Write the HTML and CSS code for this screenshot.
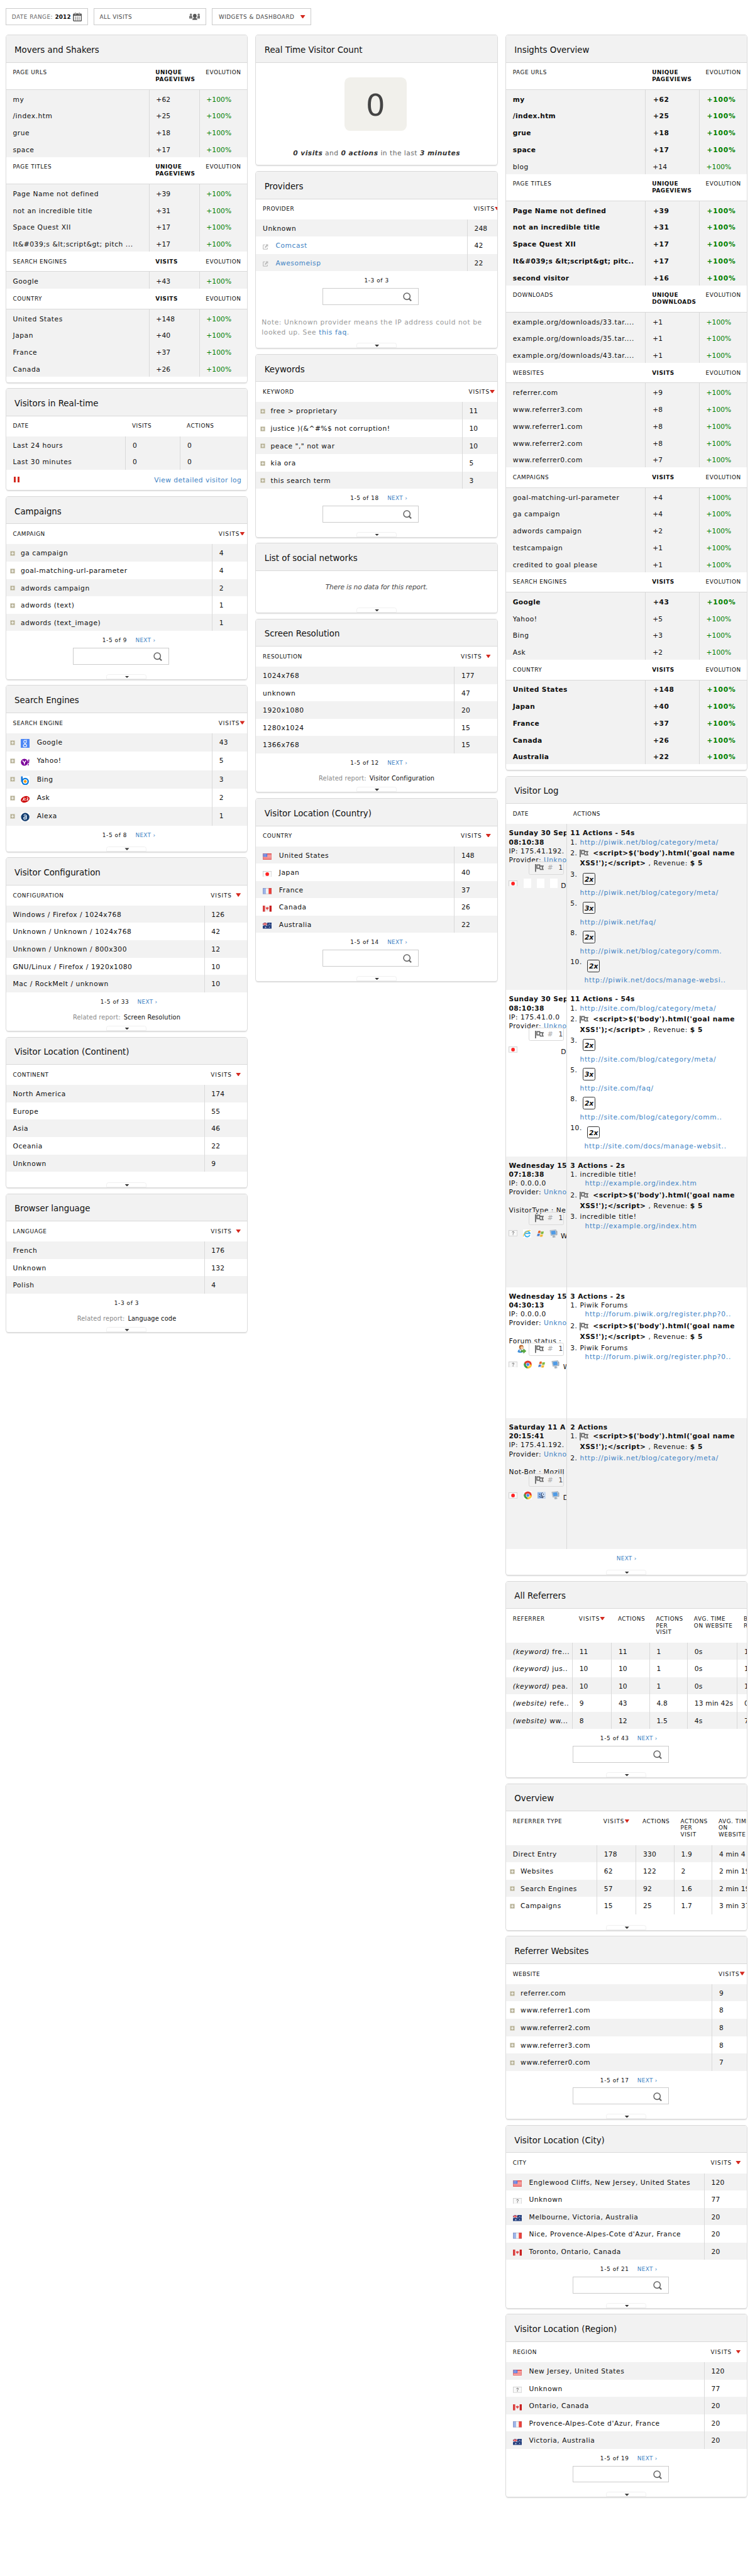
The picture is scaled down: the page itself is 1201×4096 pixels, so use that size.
FILE: index.html
```html
<!DOCTYPE html>
<html lang="en">
<head>
<meta charset="utf-8">
<title>Dashboard</title>
<link rel="stylesheet" href="styles.css">
</head>
<body>
<svg class="defs" width="0" height="0" aria-hidden="true">
  <symbol id="plus" viewBox="0 0 9 9"><rect width="9" height="9" rx="1.5" fill="#dcd8c8"/><rect x="1" y="1" width="7" height="7" fill="#b5b096"/><path d="M4.5 2v5M2 4.5h5" stroke="#fff" stroke-width="1.2"/></symbol>
  <symbol id="lens" viewBox="0 0 16 16"><circle cx="7" cy="7" r="5.8" fill="none" stroke="#666" stroke-width="1.7"/><path d="M10.5 11l4.3 4" stroke="#666" stroke-width="2.4"/></symbol>
  <symbol id="ext" viewBox="0 0 10 10"><path d="M4 1.5H.8v7.7h7.4V6.5" fill="none" stroke="#aaa"/><path d="M5 .5h4.5V5L8 3.6 5 7 3.2 5.500 6.500 2z" fill="#bbb"/></symbol>
  <symbol id="us" viewBox="0 0 16 11"><rect width="16" height="11" fill="#e33"/><path d="M0 2.500h16M0 4.500h16M0 6.500h16M0 8.500h16" stroke="#fff"/><rect width="8" height="6" fill="#4a6fe0"/><path d="M1 1.500h6M1.500 3h6M1 4.500h6" stroke="#fff" stroke-width=".8" stroke-dasharray="1 1"/><rect x=".5" y=".5" width="15" height="10" fill="none" stroke="#c66" stroke-opacity=".6"/></symbol>
  <symbol id="jp" viewBox="0 0 16 11"><rect x=".5" y=".5" width="15" height="10" fill="#fafafa" stroke="#ccc"/><circle cx="8" cy="5.500" r="3.200" fill="#f22"/></symbol>
  <symbol id="fr" viewBox="0 0 16 11"><rect width="16" height="11" fill="#f2f2f2"/><rect width="5.500" height="11" fill="#9db4ea"/><rect x="10.500" width="5.500" height="11" fill="#f0413a"/><rect x=".5" y=".5" width="15" height="10" fill="none" stroke="#668" stroke-opacity=".35"/></symbol>
  <symbol id="ca" viewBox="0 0 16 11"><rect width="16" height="11" fill="#f4f4f4"/><rect width="4" height="11" fill="#d94040"/><rect x="12" width="4" height="11" fill="#c81e1e"/><path d="M8 2l1 1.500 1.800-.3-.6 2.300L8.400 7v1.500h-.8V7L5.800 5.500l-.6-2.300L7 3.500z" fill="#e04a4a"/></symbol>
  <symbol id="au" viewBox="0 0 16 11"><rect width="16" height="11" fill="#26417f"/><path d="M0 0l8 5.500M8 0L0 5.500" stroke="#fff" stroke-width="1.200"/><path d="M4 0v5.500M0 2.500h8" stroke="#e55" stroke-width="1.500"/><circle cx="5" cy="8.500" r="1.200" fill="#dde"/><path d="M12 2v1.500M12 7.500V9M10 4.500h1M14 4h1" stroke="#fff"/></symbol>
  <symbol id="xx" viewBox="0 0 16 11"><rect x=".5" y=".5" width="15" height="10" fill="#f8f8f8" stroke="#ccc"/><path d="M6.500 4c0-1.800 3.200-1.800 3.200 0C9.700 5.200 8 5 8 6.500M8 7.500v1.200" fill="none" stroke="#555" stroke-width="1.100"/></symbol>
  <symbol id="google" viewBox="0 0 16 16"><rect width="16" height="16" rx="1" fill="#4c86f5"/><ellipse cx="7.700" cy="5" rx="2.300" ry="2.700" fill="none" stroke="#fff" stroke-width="1.200"/><ellipse cx="7.700" cy="11.800" rx="3" ry="2.300" fill="none" stroke="#fff" stroke-width="1.200"/><path d="M8 7.500c-1.500 1 0 1.500 1.500 2.500M9 2.500l2-.5" fill="none" stroke="#fff" stroke-width="1.100"/></symbol>
  <symbol id="yahoo" viewBox="0 0 16 16"><circle cx="6.500" cy="9" r="6.200" fill="#7b0099"/><path d="M3.200 6l3.300 4 3-4M6.500 9.500V13" fill="none" stroke="#fff" stroke-width="1.700"/><path d="M14.500 4l-.8 7" stroke="#7b0099" stroke-width="2"/><circle cx="13.500" cy="13.500" r="1.200" fill="#7b0099"/></symbol>
  <symbol id="bing" viewBox="0 0 16 16"><rect width="16" height="16" fill="#fff"/><path d="M2 .5v10" stroke="#0a6fd8" stroke-width="2.800"/><circle cx="8" cy="9.700" r="5.300" fill="#fff" stroke="#0a7bdc" stroke-width="2.600"/><circle cx="8" cy="9.500" r="2.500" fill="#f90"/></symbol>
  <symbol id="ask" viewBox="0 0 16 16"><ellipse cx="8" cy="9" rx="8" ry="5.500" fill="#c00" transform="rotate(-20 8 9)"/><path d="M3 12l3-6 .5 5.500M4.500 10h2M10 6.500c-3 .5-1.500 2-.5 3s-.5 2-2 1.500M12.500 4.500l-1 7M14 7.500l-2 1.500 1.500 2" fill="none" stroke="#fff" stroke-width="1.100"/></symbol>
  <symbol id="alexa" viewBox="0 0 16 16"><rect width="16" height="16" fill="#fff"/><circle cx="8" cy="8" r="7.500" fill="#123c6e"/><path d="M5.500 5.500c1-2 4.500-1.500 4.500.5v6M10 7.500c-3 0-5 .7-4.500 3s4 1.500 4.500-1" fill="none" stroke="#cde" stroke-width="1.900"/></symbol>
  <symbol id="ie" viewBox="0 0 16 16"><rect width="16" height="16" fill="#fff"/><path d="M13 10.500A5.200 5.200 0 1 1 13.200 7.500H4" fill="none" stroke="#3bb3ee" stroke-width="2.400"/><path d="M1 13.500C-1 9 9 0 14.500 2" fill="none" stroke="#f6c83c" stroke-width="1.300"/></symbol>
  <symbol id="chrome" viewBox="0 0 16 16"><rect width="16" height="16" fill="#fff"/><circle cx="8" cy="8" r="7.500" fill="#e33b2e"/><path d="M8 8H15.500A7.500 7.500 0 0 1 7 15.400z" fill="#fc3"/><path d="M1.500 4.200L6 11l1.500 4.400A7.500 7.500 0 0 1 1.500 4.200z" fill="#3a4"/><circle cx="8" cy="8" r="3.600" fill="#fff"/><circle cx="8" cy="8" r="2.800" fill="#4486ee"/></symbol>
  <symbol id="win" viewBox="0 0 16 16"><path d="M4 3q2.500-1.500 4.500 0L7.500 7.500Q5 6 3 7.500z" fill="#e2662c"/><path d="M9.500 3.500q2.500 1 5 0l-1 4.500q-2.500 1.200-5 0z" fill="#7fb83c"/><path d="M2.500 8.500q2.500-1.500 4.500 0L6 13Q3.500 11.500 1.200 13z" fill="#4a7fd0"/><path d="M8 9q2.500 1.200 5 0l-1 4.500q-2.500 1-5 0z" fill="#f0b93a"/></symbol>
  <symbol id="pc" viewBox="0 0 16 16"><path d="M1 1.800L12.500.5l1.500 10L3 11.500z" fill="#c3ccd6" stroke="#9aa6b4" stroke-width=".8"/><path d="M2.800 3l8.200-.9 1.200 7-8.200.9z" fill="#4f9be6"/><path d="M6.500 11.500l3.500-.3.500 2 2 1.300-5 1.200-2-1z" fill="#a9b3bd"/><path d="M13 2l2 1v7l-1.300.8z" fill="#98a2ad"/></symbol>
  <symbol id="mac" viewBox="0 0 16 16"><rect y="2" width="15" height="12" fill="#8fb6ea"/><rect x="8" y="2" width="7" height="12" fill="#c9dcf4"/><path d="M9.500 2.500C7 5 7 8 7 8.500h2c0 2 0 3 .7 5M4 5v2M11.500 5v2M3 10c3 2.300 7 2.300 10 0" fill="none" stroke="#1a2a4a" stroke-width="1.100"/></symbol>
  <symbol id="user" viewBox="0 0 16 16"><path d="M.5 13.500q0-5 5.500-5.500l4 5.500q-5 2-9.500 0z" fill="#3f8fd8"/><path d="M3.500 9l2 4 2-4z" fill="#fff"/><circle cx="7" cy="4.500" r="3.900" fill="#b5692e"/><circle cx="8" cy="5.500" r="2.600" fill="#f3c9a0"/><path d="M6.500 10H11V7.500l4.600 4-4.600 4V13H6.500z" fill="#58b03e" stroke="#2f7a1e" stroke-width=".6"/></symbol>
  <symbol id="goal" viewBox="0 0 16 14"><path d="M1 0v14" stroke="#666" stroke-width="2"/><path d="M3.500 1.500h5v6h-5zM8.500 3.500h6L13 6.500l1.500 3h-5V8" fill="none" stroke="#666" stroke-width="1.800"/></symbol>
  <symbol id="cal" viewBox="0 0 16 16"><rect x=".9" y="2.300" width="14.200" height="13" rx="2" fill="#fff" stroke="#555" stroke-width="1.700"/><path d="M1 4h14" stroke="#555" stroke-width="3"/><path d="M4.500 0v3.500M11.500 0v3.500" stroke="#fff" stroke-width="2.600"/><path d="M4.500 0v3M11.500 0v3" stroke="#555" stroke-width="1.200"/><path d="M4 8h8M4 10.500h8M4 13h8" stroke="#555" stroke-width="1.500" stroke-dasharray="1.700 1.400"/></symbol>
  <symbol id="people" viewBox="0 0 20 12"><g fill="#777"><circle cx="3" cy="2.500" r="1.900"/><circle cx="17" cy="2.500" r="1.900"/><path d="M0 10V6q0-1.500 1.500-1.500H5l1 5H0zM20 10V6q0-1.500-1.500-1.500H15l-1 5h6z"/></g><g fill="#555"><ellipse cx="10" cy="4.800" rx="3.200" ry="3.600"/><path d="M5.500 12q.3-3 3-3.500h3q2.700.5 3 3.500z"/></g></symbol>
</svg>

<header class="bar">
  <div class="box date">Date range: <b>2012</b><svg class="i16"><use href="#cal"/></svg></div>
  <div class="box seg">All visits<svg class="people"><use href="#people"/></svg></div>
  <div class="box dash">Widgets &amp; Dashboard<i class="tri"></i></div>
</header>

<main class="cols">
<div class="col">
  <section class="card movers">
    <h2>Movers and Shakers</h2>
    <div class="t ins">
      <p class="h two"><span>Page URLs</span><span><b>Unique Pageviews</b></span><span>Evolution</span></p>
      <p class="r"><span>my</span><span>+62</span><span>+100%</span></p>
      <p class="r"><span>/index.htm</span><span>+25</span><span>+100%</span></p>
      <p class="r"><span>grue</span><span>+18</span><span>+100%</span></p>
      <p class="r"><span>space</span><span>+17</span><span>+100%</span></p>
      <p class="h two"><span>Page Titles</span><span><b>Unique Pageviews</b></span><span>Evolution</span></p>
      <p class="r"><span>Page Name not defined</span><span>+39</span><span>+100%</span></p>
      <p class="r"><span>not an incredible title</span><span>+31</span><span>+100%</span></p>
      <p class="r"><span>Space Quest XII</span><span>+17</span><span>+100%</span></p>
      <p class="r"><span>It&amp;#039;s &amp;lt;script&amp;gt; pitch ...</span><span>+17</span><span>+100%</span></p>
      <p class="h"><span>Search Engines</span><span><b>Visits</b></span><span>Evolution</span></p>
      <p class="r"><span>Google</span><span>+43</span><span>+100%</span></p>
      <p class="h"><span>Country</span><span><b>Visits</b></span><span>Evolution</span></p>
      <p class="r"><span>United States</span><span>+148</span><span>+100%</span></p>
      <p class="r"><span>Japan</span><span>+40</span><span>+100%</span></p>
      <p class="r"><span>France</span><span>+37</span><span>+100%</span></p>
      <p class="r"><span>Canada</span><span>+26</span><span>+100%</span></p>
    </div>
  </section>

  <section class="card">
    <h2>Visitors in Real-time</h2>
    <div class="t live">
      <p class="h"><span>Date</span><span>Visits</span><span>Actions</span></p>
      <p class="r"><span>Last 24 hours</span><span>0</span><span>0</span></p>
      <p class="r"><span>Last 30 minutes</span><span>0</span><span>0</span></p>
    </div>
    <div class="livefoot"><i class="pause"></i><a>View detailed visitor log</a></div>
  </section>

  <section class="card">
    <h2>Campaigns</h2>
    <div class="t z c368 px">
      <p class="h"><span>Campaign</span><span>Visits<i class="tri"></i></span></p>
      <p class="r"><span><svg><use href="#plus"/></svg>ga campaign</span><span>4</span></p>
      <p class="r"><span><svg><use href="#plus"/></svg>goal-matching-url-parameter</span><span>4</span></p>
      <p class="r"><span><svg><use href="#plus"/></svg>adwords campaign</span><span>2</span></p>
      <p class="r"><span><svg><use href="#plus"/></svg>adwords (text)</span><span>1</span></p>
      <p class="r"><span><svg><use href="#plus"/></svg>adwords (text_image)</span><span>1</span></p>
    </div>
    <footer class="search"><div class="pg">1-5 of 9<a>Next ›</a></div><div class="q"><svg class="i16"><use href="#lens"/></svg></div><i class="tab"></i></footer>
  </section>

  <section class="card">
    <h2>Search Engines</h2>
    <div class="t z c368 px eng">
      <p class="h"><span>Search Engine</span><span>Visits<i class="tri"></i></span></p>
      <p class="r"><span><svg><use href="#plus"/></svg><svg class="i16"><use href="#google"/></svg>Google</span><span>43</span></p>
      <p class="r"><span><svg><use href="#plus"/></svg><svg class="i16"><use href="#yahoo"/></svg>Yahoo!</span><span>5</span></p>
      <p class="r"><span><svg><use href="#plus"/></svg><svg class="i16"><use href="#bing"/></svg>Bing</span><span>3</span></p>
      <p class="r"><span><svg><use href="#plus"/></svg><svg class="i16"><use href="#ask"/></svg>Ask</span><span>2</span></p>
      <p class="r"><span><svg><use href="#plus"/></svg><svg class="i16"><use href="#alexa"/></svg>Alexa</span><span>1</span></p>
    </div>
    <footer class="pager"><div class="pg">1-5 of 8<a>Next ›</a></div><i class="tab"></i></footer>
  </section>

  <section class="card">
    <h2>Visitor Configuration</h2>
    <div class="t z c354">
      <p class="h"><span>Configuration</span><span>Visits<i class="tri"></i></span></p>
      <p class="r"><span>Windows / Firefox / 1024x768</span><span>126</span></p>
      <p class="r"><span>Unknown / Unknown / 1024x768</span><span>42</span></p>
      <p class="r"><span>Unknown / Unknown / 800x300</span><span>12</span></p>
      <p class="r"><span>GNU/Linux / Firefox / 1920x1080</span><span>10</span></p>
      <p class="r"><span>Mac / RockMelt / unknown</span><span>10</span></p>
    </div>
    <footer class="related"><div class="pg">1-5 of 33<a>Next ›</a></div><div class="rel">Related report: <b>Screen Resolution</b></div><i class="tab"></i></footer>
  </section>

  <section class="card">
    <h2>Visitor Location (Continent)</h2>
    <div class="t z c354">
      <p class="h"><span>Continent</span><span>Visits<i class="tri"></i></span></p>
      <p class="r"><span>North America</span><span>174</span></p>
      <p class="r"><span>Europe</span><span>55</span></p>
      <p class="r"><span>Asia</span><span>46</span></p>
      <p class="r"><span>Oceania</span><span>22</span></p>
      <p class="r"><span>Unknown</span><span>9</span></p>
    </div>
    <footer class="bare"><i class="tab"></i></footer>
  </section>

  <section class="card">
    <h2>Browser language</h2>
    <div class="t z c354">
      <p class="h"><span>Language</span><span>Visits<i class="tri"></i></span></p>
      <p class="r"><span>French</span><span>176</span></p>
      <p class="r"><span>Unknown</span><span>132</span></p>
      <p class="r"><span>Polish</span><span>4</span></p>
    </div>
    <footer class="related"><div class="pg only">1-3 of 3</div><div class="rel">Related report: <b>Language code</b></div><i class="tab"></i></footer>
  </section>
</div>

<div class="col">
  <section class="card count">
    <h2>Real Time Visitor Count</h2>
    <div class="big">0</div>
    <div class="cap"><b>0 visits</b> and <b>0 actions</b> in the last <b>3 minutes</b></div>
  </section>

  <section class="card">
    <h2>Providers</h2>
    <div class="t z c377 prov">
      <p class="h"><span>Provider</span><span>Visits<i class="tri"></i></span></p>
      <p class="r"><span>Unknown</span><span>248</span></p>
      <p class="r"><span><svg><use href="#ext"/></svg><a>Comcast</a></span><span>42</span></p>
      <p class="r"><span><svg><use href="#ext"/></svg><a>Awesomeisp</a></span><span>22</span></p>
    </div>
    <footer class="noted"><div class="pg only">1-3 of 3</div><div class="q"><svg class="i16"><use href="#lens"/></svg></div><div class="note">Note: Unknown provider means the IP address could not be<br>looked up. See <a>this faq</a>.</div><i class="tab"></i></footer>
  </section>

  <section class="card">
    <h2>Keywords</h2>
    <div class="t z c368 px">
      <p class="h"><span>Keyword</span><span>Visits<i class="tri"></i></span></p>
      <p class="r"><span><svg><use href="#plus"/></svg>free &gt; proprietary</span><span>11</span></p>
      <p class="r"><span><svg><use href="#plus"/></svg>justice )(&amp;^#%$ not corruption!</span><span>10</span></p>
      <p class="r"><span><svg><use href="#plus"/></svg>peace "," not war</span><span>10</span></p>
      <p class="r"><span><svg><use href="#plus"/></svg>kia ora</span><span>5</span></p>
      <p class="r"><span><svg><use href="#plus"/></svg>this search term</span><span>3</span></p>
    </div>
    <footer class="search"><div class="pg">1-5 of 18<a>Next ›</a></div><div class="q"><svg class="i16"><use href="#lens"/></svg></div><i class="tab"></i></footer>
  </section>

  <section class="card">
    <h2>List of social networks</h2>
    <footer class="empty"><em>There is no data for this report.</em><i class="tab"></i></footer>
  </section>

  <section class="card">
    <h2>Screen Resolution</h2>
    <div class="t z c354">
      <p class="h"><span>Resolution</span><span>Visits<i class="tri"></i></span></p>
      <p class="r"><span>1024x768</span><span>177</span></p>
      <p class="r"><span>unknown</span><span>47</span></p>
      <p class="r"><span>1920x1080</span><span>20</span></p>
      <p class="r"><span>1280x1024</span><span>15</span></p>
      <p class="r"><span>1366x768</span><span>15</span></p>
    </div>
    <footer class="related"><div class="pg">1-5 of 12<a>Next ›</a></div><div class="rel">Related report: <b>Visitor Configuration</b></div><i class="tab"></i></footer>
  </section>

  <section class="card">
    <h2>Visitor Location (Country)</h2>
    <div class="t z c354 flags">
      <p class="h"><span>Country</span><span>Visits<i class="tri"></i></span></p>
      <p class="r"><span><svg><use href="#us"/></svg>United States</span><span>148</span></p>
      <p class="r"><span><svg><use href="#jp"/></svg>Japan</span><span>40</span></p>
      <p class="r"><span><svg><use href="#fr"/></svg>France</span><span>37</span></p>
      <p class="r"><span><svg><use href="#ca"/></svg>Canada</span><span>26</span></p>
      <p class="r"><span><svg><use href="#au"/></svg>Australia</span><span>22</span></p>
    </div>
    <footer class="search"><div class="pg">1-5 of 14<a>Next ›</a></div><div class="q"><svg class="i16"><use href="#lens"/></svg></div><i class="tab"></i></footer>
  </section>
</div>

<div class="col">
  <section class="card insights">
    <h2>Insights Overview</h2>
    <div class="t ins wide">
      <p class="h two"><span>Page URLs</span><span><b>Unique Pageviews</b></span><span>Evolution</span></p>
      <p class="r s"><span>my</span><span>+62</span><span>+100%</span></p>
      <p class="r s"><span>/index.htm</span><span>+25</span><span>+100%</span></p>
      <p class="r s"><span>grue</span><span>+18</span><span>+100%</span></p>
      <p class="r s"><span>space</span><span>+17</span><span>+100%</span></p>
      <p class="r"><span>blog</span><span>+14</span><span>+100%</span></p>
      <p class="h two"><span>Page Titles</span><span><b>Unique Pageviews</b></span><span>Evolution</span></p>
      <p class="r s"><span>Page Name not defined</span><span>+39</span><span>+100%</span></p>
      <p class="r s"><span>not an incredible title</span><span>+31</span><span>+100%</span></p>
      <p class="r s"><span>Space Quest XII</span><span>+17</span><span>+100%</span></p>
      <p class="r s"><span>It&amp;#039;s &amp;lt;script&amp;gt; pitc..</span><span>+17</span><span>+100%</span></p>
      <p class="r s"><span>second visitor</span><span>+16</span><span>+100%</span></p>
      <p class="h two"><span>Downloads</span><span><b>Unique Downloads</b></span><span>Evolution</span></p>
      <p class="r"><span>example.org/downloads/33.tar....</span><span>+1</span><span>+100%</span></p>
      <p class="r"><span>example.org/downloads/35.tar....</span><span>+1</span><span>+100%</span></p>
      <p class="r"><span>example.org/downloads/43.tar....</span><span>+1</span><span>+100%</span></p>
      <p class="h"><span>Websites</span><span><b>Visits</b></span><span>Evolution</span></p>
      <p class="r"><span>referrer.com</span><span>+9</span><span>+100%</span></p>
      <p class="r"><span>www.referrer3.com</span><span>+8</span><span>+100%</span></p>
      <p class="r"><span>www.referrer1.com</span><span>+8</span><span>+100%</span></p>
      <p class="r"><span>www.referrer2.com</span><span>+8</span><span>+100%</span></p>
      <p class="r"><span>www.referrer0.com</span><span>+7</span><span>+100%</span></p>
      <p class="h"><span>Campaigns</span><span><b>Visits</b></span><span>Evolution</span></p>
      <p class="r"><span>goal-matching-url-parameter</span><span>+4</span><span>+100%</span></p>
      <p class="r"><span>ga campaign</span><span>+4</span><span>+100%</span></p>
      <p class="r"><span>adwords campaign</span><span>+2</span><span>+100%</span></p>
      <p class="r"><span>testcampaign</span><span>+1</span><span>+100%</span></p>
      <p class="r"><span>credited to goal please</span><span>+1</span><span>+100%</span></p>
      <p class="h"><span>Search Engines</span><span><b>Visits</b></span><span>Evolution</span></p>
      <p class="r s"><span>Google</span><span>+43</span><span>+100%</span></p>
      <p class="r"><span>Yahoo!</span><span>+5</span><span>+100%</span></p>
      <p class="r"><span>Bing</span><span>+3</span><span>+100%</span></p>
      <p class="r"><span>Ask</span><span>+2</span><span>+100%</span></p>
      <p class="h"><span>Country</span><span><b>Visits</b></span><span>Evolution</span></p>
      <p class="r s"><span>United States</span><span>+148</span><span>+100%</span></p>
      <p class="r s"><span>Japan</span><span>+40</span><span>+100%</span></p>
      <p class="r s"><span>France</span><span>+37</span><span>+100%</span></p>
      <p class="r s"><span>Canada</span><span>+26</span><span>+100%</span></p>
      <p class="r s"><span>Australia</span><span>+22</span><span>+100%</span></p>
    </div>
  </section>

  <section class="card">
    <h2>Visitor Log</h2>
    <div class="t log">
      <p class="h"><span>Date</span><span>Actions</span></p>
      <div class="v tall">
        <div class="who">
          <b>Sunday 30 Sep</b><b>08:10:38</b><div>IP: 175.41.192.</div><div>Provider: <a>Unkno</a></div>
          <div class="gl"><span class="gb"><svg><use href="#goal"/></svg><i>#</i> 1</span></div>
          <div class="ic"><svg class="fl"><use href="#jp"/></svg><i class="blank"></i><i class="blank"></i><i class="blank"></i><span>D</span></div>
        </div>
        <div class="what">
          <b>11 Actions - 54s</b>
          <div class="a"><span>1.</span><a>http://piwik.net/blog/category/meta/</a></div>
          <div class="a g"><span>2.</span><div><svg><use href="#goal"/></svg> <b>&lt;script&gt;$('body').html('goal name<br>XSS!');&lt;/script&gt;</b> , Revenue: <b>$ 5</b></div></div>
          <div class="a m"><span>3.</span><div><em>2x</em><a>http://piwik.net/blog/category/meta/</a></div></div>
          <div class="a m"><span>5.</span><div><em>3x</em><a>http://piwik.net/faq/</a></div></div>
          <div class="a m"><span>8.</span><div><em>2x</em><a>http://piwik.net/blog/category/comm.</a></div></div>
          <div class="a m ten"><span>10.</span><div><em>2x</em><a>http://piwik.net/docs/manage-websi..</a></div></div>
        </div>
      </div>
      <div class="v tall">
        <div class="who">
          <b>Sunday 30 Sep</b><b>08:10:38</b><div>IP: 175.41.0.0</div><div>Provider: <a>Unkno</a></div>
          <div class="gl"><span class="gb"><svg><use href="#goal"/></svg><i>#</i> 1</span></div>
          <div class="ic"><svg class="fl"><use href="#jp"/></svg><i class="blank"></i><i class="blank"></i><i class="blank"></i><span>D</span></div>
        </div>
        <div class="what">
          <b>11 Actions - 54s</b>
          <div class="a"><span>1.</span><a>http://site.com/blog/category/meta/</a></div>
          <div class="a g"><span>2.</span><div><svg><use href="#goal"/></svg> <b>&lt;script&gt;$('body').html('goal name<br>XSS!');&lt;/script&gt;</b> , Revenue: <b>$ 5</b></div></div>
          <div class="a m"><span>3.</span><div><em>2x</em><a>http://site.com/blog/category/meta/</a></div></div>
          <div class="a m"><span>5.</span><div><em>3x</em><a>http://site.com/faq/</a></div></div>
          <div class="a m"><span>8.</span><div><em>2x</em><a>http://site.com/blog/category/comm..</a></div></div>
          <div class="a m ten"><span>10.</span><div><em>2x</em><a>http://site.com/docs/manage-websit..</a></div></div>
        </div>
      </div>
      <div class="v">
        <div class="who">
          <b>Wednesday 15</b><b>07:18:38</b><div>IP: 0.0.0.0</div><div>Provider: <a>Unkno</a></div><div class="cv">VisitorType : Ne</div>
          <div class="gl"><span class="gb"><svg><use href="#goal"/></svg><i>#</i> 1</span></div>
          <div class="ic near"><svg class="fl"><use href="#xx"/></svg><svg><use href="#ie"/></svg><svg><use href="#win"/></svg><svg><use href="#pc"/></svg><span>W</span></div>
        </div>
        <div class="what">
          <b>3 Actions - 2s</b>
          <div class="a"><span>1.</span><div>incredible title!<a class="in">http://example.org/index.htm</a></div></div>
          <div class="a g far"><span>2.</span><div><svg><use href="#goal"/></svg> <b>&lt;script&gt;$('body').html('goal name<br>XSS!');&lt;/script&gt;</b> , Revenue: <b>$ 5</b></div></div>
          <div class="a"><span>3.</span><div>incredible title!<a class="in">http://example.org/index.htm</a></div></div>
        </div>
      </div>
      <div class="v">
        <div class="who">
          <b>Wednesday 15</b><b>04:30:13</b><div>IP: 0.0.0.0</div><div>Provider: <a>Unkno</a></div><div class="cv">Forum status :</div>
          <div class="gl"><svg class="us"><use href="#user"/></svg><span class="gb"><svg><use href="#goal"/></svg><i>#</i> 1</span></div>
          <div class="ic mid"><svg class="fl"><use href="#xx"/></svg><svg><use href="#chrome"/></svg><svg><use href="#win"/></svg><svg><use href="#pc"/></svg><span>W</span></div>
        </div>
        <div class="what">
          <b>3 Actions - 2s</b>
          <div class="a"><span>1.</span><div>Piwik Forums<a class="in">http://forum.piwik.org/register.php?0..</a></div></div>
          <div class="a g far"><span>2.</span><div><svg><use href="#goal"/></svg> <b>&lt;script&gt;$('body').html('goal name<br>XSS!');&lt;/script&gt;</b> , Revenue: <b>$ 5</b></div></div>
          <div class="a"><span>3.</span><div>Piwik Forums<a class="in">http://forum.piwik.org/register.php?0..</a></div></div>
        </div>
      </div>
      <div class="v">
        <div class="who">
          <b>Saturday 11 A</b><b>20:15:41</b><div>IP: 175.41.192.</div><div>Provider: <a>Unkno</a></div><div class="cv">Not-Bot : Mozill</div>
          <div class="gl"><span class="gb"><svg><use href="#goal"/></svg><i>#</i> 1</span></div>
          <div class="ic mid"><svg class="fl"><use href="#jp"/></svg><svg><use href="#chrome"/></svg><svg><use href="#mac"/></svg><svg><use href="#pc"/></svg><span>D</span></div>
        </div>
        <div class="what">
          <b>2 Actions</b>
          <div class="a g first"><span>1.</span><div><svg><use href="#goal"/></svg> <b>&lt;script&gt;$('body').html('goal name<br>XSS!');&lt;/script&gt;</b> , Revenue: <b>$ 5</b></div></div>
          <div class="a"><span>2.</span><a>http://piwik.net/blog/category/meta/</a></div>
        </div>
      </div>
    </div>
    <footer class="pager"><div class="pg only"><a>Next ›</a></div><i class="tab"></i></footer>
  </section>

  <section class="card">
    <h2>All Referrers</h2>
    <div class="t z refs">
      <p class="h three"><span>Referrer</span><span>Visits<i class="tri"></i></span><span>Actions</span><span>Actions<br>per<br>visit</span><span>Avg. time<br>on website</span><span>B<br>R</span></p>
      <p class="r"><span><em>(keyword)</em> fre...</span><span>11</span><span>11</span><span>1</span><span>0s</span><span>1</span></p>
      <p class="r"><span><em>(keyword)</em> jus..</span><span>10</span><span>10</span><span>1</span><span>0s</span><span>1</span></p>
      <p class="r"><span><em>(keyword)</em> pea.</span><span>10</span><span>10</span><span>1</span><span>0s</span><span>1</span></p>
      <p class="r"><span><em>(website)</em> refe..</span><span>9</span><span>43</span><span>4.8</span><span>13 min 42s</span><span>0</span></p>
      <p class="r"><span><em>(website)</em> ww...</span><span>8</span><span>12</span><span>1.5</span><span>4s</span><span>7</span></p>
    </div>
    <footer class="search"><div class="pg">1-5 of 43<a>Next ›</a></div><div class="q"><svg class="i16"><use href="#lens"/></svg></div><i class="tab"></i></footer>
  </section>

  <section class="card">
    <h2>Overview</h2>
    <div class="t z over px">
      <p class="h three"><span>Referrer Type</span><span>Visits<i class="tri"></i></span><span>Actions</span><span>Actions<br>per<br>visit</span><span>Avg. time<br>on<br>website</span></p>
      <p class="r"><span>Direct Entry</span><span>178</span><span>330</span><span>1.9</span><span>4 min 4</span></p>
      <p class="r"><span><svg><use href="#plus"/></svg>Websites</span><span>62</span><span>122</span><span>2</span><span>2 min 19</span></p>
      <p class="r"><span><svg><use href="#plus"/></svg>Search Engines</span><span>57</span><span>92</span><span>1.6</span><span>2 min 19</span></p>
      <p class="r"><span><svg><use href="#plus"/></svg>Campaigns</span><span>15</span><span>25</span><span>1.7</span><span>3 min 37</span></p>
    </div>
    <footer class="bare"><i class="tab"></i></footer>
  </section>

  <section class="card">
    <h2>Referrer Websites</h2>
    <div class="t z c368 px">
      <p class="h"><span>Website</span><span>Visits<i class="tri"></i></span></p>
      <p class="r"><span><svg><use href="#plus"/></svg>referrer.com</span><span>9</span></p>
      <p class="r"><span><svg><use href="#plus"/></svg>www.referrer1.com</span><span>8</span></p>
      <p class="r"><span><svg><use href="#plus"/></svg>www.referrer2.com</span><span>8</span></p>
      <p class="r"><span><svg><use href="#plus"/></svg>www.referrer3.com</span><span>8</span></p>
      <p class="r"><span><svg><use href="#plus"/></svg>www.referrer0.com</span><span>7</span></p>
    </div>
    <footer class="search"><div class="pg">1-5 of 17<a>Next ›</a></div><div class="q"><svg class="i16"><use href="#lens"/></svg></div><i class="tab"></i></footer>
  </section>

  <section class="card">
    <h2>Visitor Location (City)</h2>
    <div class="t z c354 flags">
      <p class="h"><span>City</span><span>Visits<i class="tri"></i></span></p>
      <p class="r"><span><svg><use href="#us"/></svg>Englewood Cliffs, New Jersey, United States</span><span>120</span></p>
      <p class="r"><span><svg><use href="#xx"/></svg>Unknown</span><span>77</span></p>
      <p class="r"><span><svg><use href="#au"/></svg>Melbourne, Victoria, Australia</span><span>20</span></p>
      <p class="r"><span><svg><use href="#fr"/></svg>Nice, Provence-Alpes-Cote d'Azur, France</span><span>20</span></p>
      <p class="r"><span><svg><use href="#ca"/></svg>Toronto, Ontario, Canada</span><span>20</span></p>
    </div>
    <footer class="search"><div class="pg">1-5 of 21<a>Next ›</a></div><div class="q"><svg class="i16"><use href="#lens"/></svg></div><i class="tab"></i></footer>
  </section>

  <section class="card">
    <h2>Visitor Location (Region)</h2>
    <div class="t z c354 flags">
      <p class="h"><span>Region</span><span>Visits<i class="tri"></i></span></p>
      <p class="r"><span><svg><use href="#us"/></svg>New Jersey, United States</span><span>120</span></p>
      <p class="r"><span><svg><use href="#xx"/></svg>Unknown</span><span>77</span></p>
      <p class="r"><span><svg><use href="#ca"/></svg>Ontario, Canada</span><span>20</span></p>
      <p class="r"><span><svg><use href="#fr"/></svg>Provence-Alpes-Cote d'Azur, France</span><span>20</span></p>
      <p class="r"><span><svg><use href="#au"/></svg>Victoria, Australia</span><span>20</span></p>
    </div>
    <footer class="search"><div class="pg">1-5 of 19<a>Next ›</a></div><div class="q"><svg class="i16"><use href="#lens"/></svg></div><i class="tab"></i></footer>
  </section>
</div>
</main>
</body>
</html>
```
FILE: styles.css
```css
* { box-sizing: border-box; }

html { background: #fff; overflow: hidden; }

body {
  position: relative;
  margin: 0;
  width: 1350px;
  height: 4604px;
  overflow: hidden;
  zoom: 0.88955;
  font: 12px/16px "DejaVu Sans", Verdana, sans-serif;
  letter-spacing: 0.62px;
  color: #0d0d0d;
}

p, h2 { margin: 0; }
svg { display: block; flex: none; }
.defs { position: absolute; left: 0; top: 0; }
i { font-style: normal; }
a { color: #4183c4; }

/* toolbar */
.bar { display: flex; gap: 10px; padding: 15px 0 0 10px; height: 63px; }
.box {
  display: flex; align-items: center;
  height: 30px; padding: 0 10px;
  border: 1px solid #ccc;
  font-size: 10px; letter-spacing: 0.55px; text-transform: uppercase; color: #444;
  white-space: pre;
}
.box.date { width: 147px; color: #666; }
.box b { color: #0d0d0d; letter-spacing: 0.2px; }
.box.seg { width: 202px; }
.box.dash { width: 178px; padding-left: 11px; }
.box > svg:last-child, .box > .tri { margin-left: auto; }
.i16 { width: 16px; height: 16px; }
.people { width: 20px; height: 12px; }
.tri {
  width: 9px; height: 6px; background: #d4291f;
  clip-path: polygon(0 0, 100% 0, 55% 100%, 45% 100%);
}

/* columns of widgets */
.cols { display: grid; grid-template-columns: repeat(3, 431px); gap: 16px; padding-left: 11px; }
.col { display: flex; flex-direction: column; gap: 12px; }
.card {
  border-radius: 4px; overflow: hidden; background: #fff;
  box-shadow: 0 0 0 1px #d9d9d9, 0 2px 2px 0 #ddd;
}
.card h2 {
  height: 49px; padding: 3px 0 0 15px;
  border-bottom: 1px solid #d9d9d9; background: #f2f2f2;
  font-size: 15px; font-weight: 400; line-height: 48px; letter-spacing: 0;
}
.movers { height: 620px; }
.insights { height: 1313px; }

/* report tables */
.h, .r { display: grid; white-space: nowrap; }
.h {
  height: 36px; font-size: 10px; line-height: 12px; letter-spacing: 0.62px;
  text-transform: uppercase;
}
.h span { padding: 12px 0 0 12px; }
.h span + span { overflow: hidden; }
.r { height: 31px; }
.r span { padding: 9px 0 0 12px; line-height: 15px; overflow: hidden; }
.r span + span { padding-left: 12px; border-left: 1px solid #d9d9d9; letter-spacing: 0.2px; }
.z .r:nth-child(even) { background: #f2f2f2; }
.three { height: 60px; }

.ins .h, .ins .r { grid-template-columns: 255px 90px 86px; }
.wide .h, .wide .r { grid-template-columns: 249px 96px 86px; }
.ins .h { height: 36.5px; border-bottom: 1px solid #d9d9d9; }
.ins .h.two { height: 48.5px; white-space: normal; }
.ins .r { height: 30.1px; background: #f2f2f2; }
.ins .r span { padding-top: 10px; }
.ins .r span:last-child { color: #008000; letter-spacing: 0.08px; }
.r.s { font-weight: 700; letter-spacing: 0.42px; }
.ins .r.s span + span { padding-left: 13px; letter-spacing: 0.6px; }
.ins .r.s span:last-child { letter-spacing: 0.95px; }
.live .h, .live .r { grid-template-columns: 213px 98px 120px; }
.live .r { height: 30px; background: #f2f2f2; }
.c368 .h, .c368 .r { grid-template-columns: 368px 63px; }
.c354 .h, .c354 .r { grid-template-columns: 354px 77px; }
.c377 .h, .c377 .r { grid-template-columns: 377px 54px; }
.refs .h, .refs .r { grid-template-columns: 118px 70px 68px 68px 89px 18px; }
.refs .h span:last-child { padding-left: 12px; }
.over .h, .over .r { grid-template-columns: 162px 70px 68px 68px 63px; }
.z .h span:nth-child(2) { display: flex; align-items: flex-start; letter-spacing: 1.05px; }
.h .tri { margin: 2px 0 0 0; flex: none; }
.c354 .h .tri { margin-left: 7px; }

.r span:has(> svg) { display: flex; align-items: flex-start; }
.px .r span:has(> svg) { padding-left: 7px; }
.px .r svg { width: 9px; height: 9px; margin: 3px 10px 0 0; }
.eng .r { height: 33px; }
.eng .r .i16 { width: 16px; height: 16px; margin: 1px 13px 0 0; }
.flags .r svg { width: 16px; height: 11px; margin: 4px 13px 0 0; }
.prov .r svg { width: 10px; height: 10px; margin: 4px 13px 0 0; }

/* widget footers */
footer { position: relative; text-align: center; }
footer.search { height: 86px; }
footer.pager { height: 46px; }
footer.related { height: 69px; }
footer.bare { height: 28px; }
footer.noted { height: 137px; }
footer.empty { height: 74px; padding-top: 21px; color: #444; letter-spacing: -0.15px; }
.pg {
  padding: 10px 0 0 8px; height: 30px;
  font-size: 10px; line-height: 15px; letter-spacing: 0.7px;
}
.pg.only { padding-left: 0; }
.pg a { margin-left: 15px; letter-spacing: 0.35px; text-transform: uppercase; }
.pg.only a { margin: 0; }
.q { width: 172px; height: 30px; margin-left: 119px; border: 1px solid #ccc; display: flex; justify-content: flex-end; padding: 7px 11px 0 0; }
.rel { font-size: 11px; line-height: 22px; margin-top: 4px; color: #888; letter-spacing: 0.18px; }
.rel b { font-weight: 400; color: #0d0d0d; margin-left: 2px; }
.note { margin-top: 23px; padding-left: 10px; text-align: left; line-height: 18px; color: #999; letter-spacing: 0.66px; }
.tab {
  position: absolute; left: 179px; bottom: 0; width: 72px; height: 9px;
  border: 1px solid #f0f0f0; border-radius: 4px 4px 0 0;
}
.tab::after {
  content: ""; position: absolute; left: 32px; top: 2px; width: 8px; height: 4px;
  background: #333; clip-path: polygon(0 0, 100% 0, 50% 100%);
}
.livefoot { display: flex; align-items: center; justify-content: space-between; height: 36px; padding: 2px 10px 0 14px; letter-spacing: 0.5px; }
.pause { width: 10px; height: 10px; margin-bottom: 4px; border: solid #d4291f; border-width: 0 4px; }

.count { height: 232px; text-align: center; }
.count h2 { text-align: left; }
.big {
  width: 111px; height: 96px; margin: 26px 0 0 158px;
  border-radius: 10px; background: #f1f0eb;
  font-size: 54px; line-height: 100px; color: #444; letter-spacing: 0;
}
.cap { margin-top: 32px; color: #666; letter-spacing: 0.55px; }
.cap b { font-style: italic; color: #333; }

/* visitor log */
.log .h { grid-template-columns: 108px 1fr; }
.v { display: grid; grid-template-columns: 109px 322px; height: 234px; white-space: nowrap; }
.v.tall { height: 297px; }
.v:nth-child(even) { background: #f2f2f2; }
.who { padding: 9px 0 0 5px; overflow: hidden; border-right: 1px solid #d9d9d9; letter-spacing: 0.55px; }
.who > b { display: block; letter-spacing: 0.48px; }
.cv { margin-top: 16px; }
.gl { display: flex; justify-content: flex-end; align-items: center; padding-right: 4px; height: 24px; margin-top: -6px; }
.gb { display: flex; align-items: center; gap: 6px; width: 63px; height: 24px; padding-left: 10px; border: 1px solid #d9d9d9; border-radius: 3px; color: #444; white-space: pre; letter-spacing: 0; }
.gb svg { width: 16px; height: 14px; }
.gb i { color: #aaa; }
.us { width: 16px; height: 16px; margin-right: 5px; }
.ic { display: flex; align-items: center; gap: 10px; margin-top: 7px; height: 16px; }
.ic svg { width: 16px; height: 16px; }
.ic .fl { height: 11px; }
.ic.mid svg + svg, .ic.near svg + svg { width: 15px; height: 15px; }
.ic.near { gap: 9px; }
.ic span { margin: 10px 0 0 -4px; }
.blank { width: 16px; height: 16px; background: #fff; }
.what { padding: 9px 0 0 6px; }
.what > b { display: block; letter-spacing: 0.45px; }
.what a { letter-spacing: 0.86px; }
.a { display: grid; grid-template-columns: 17px 1fr; }
.a.g { line-height: 19px; margin: 2px 0; }
.a.g b { letter-spacing: 0.62px; }
.a.g.far { margin-top: 4px; }
.a.g.first { margin-top: -1px; }
.a.g svg { display: inline-block; width: 16px; height: 14px; vertical-align: -4px; margin-right: 3px; }
.a.m { height: 52px; }
.a.ten { grid-template-columns: 25px 1fr; }
.a.m em {
  display: block; width: 23px; height: 22px; margin: 4px 0 7px 5px;
  border: 1px solid #333; border-radius: 3px;
  font-weight: 700; line-height: 23px; text-align: center; letter-spacing: 0;
}
.a.m a { display: block; }
.a .in { display: block; padding-left: 9px; }
```
